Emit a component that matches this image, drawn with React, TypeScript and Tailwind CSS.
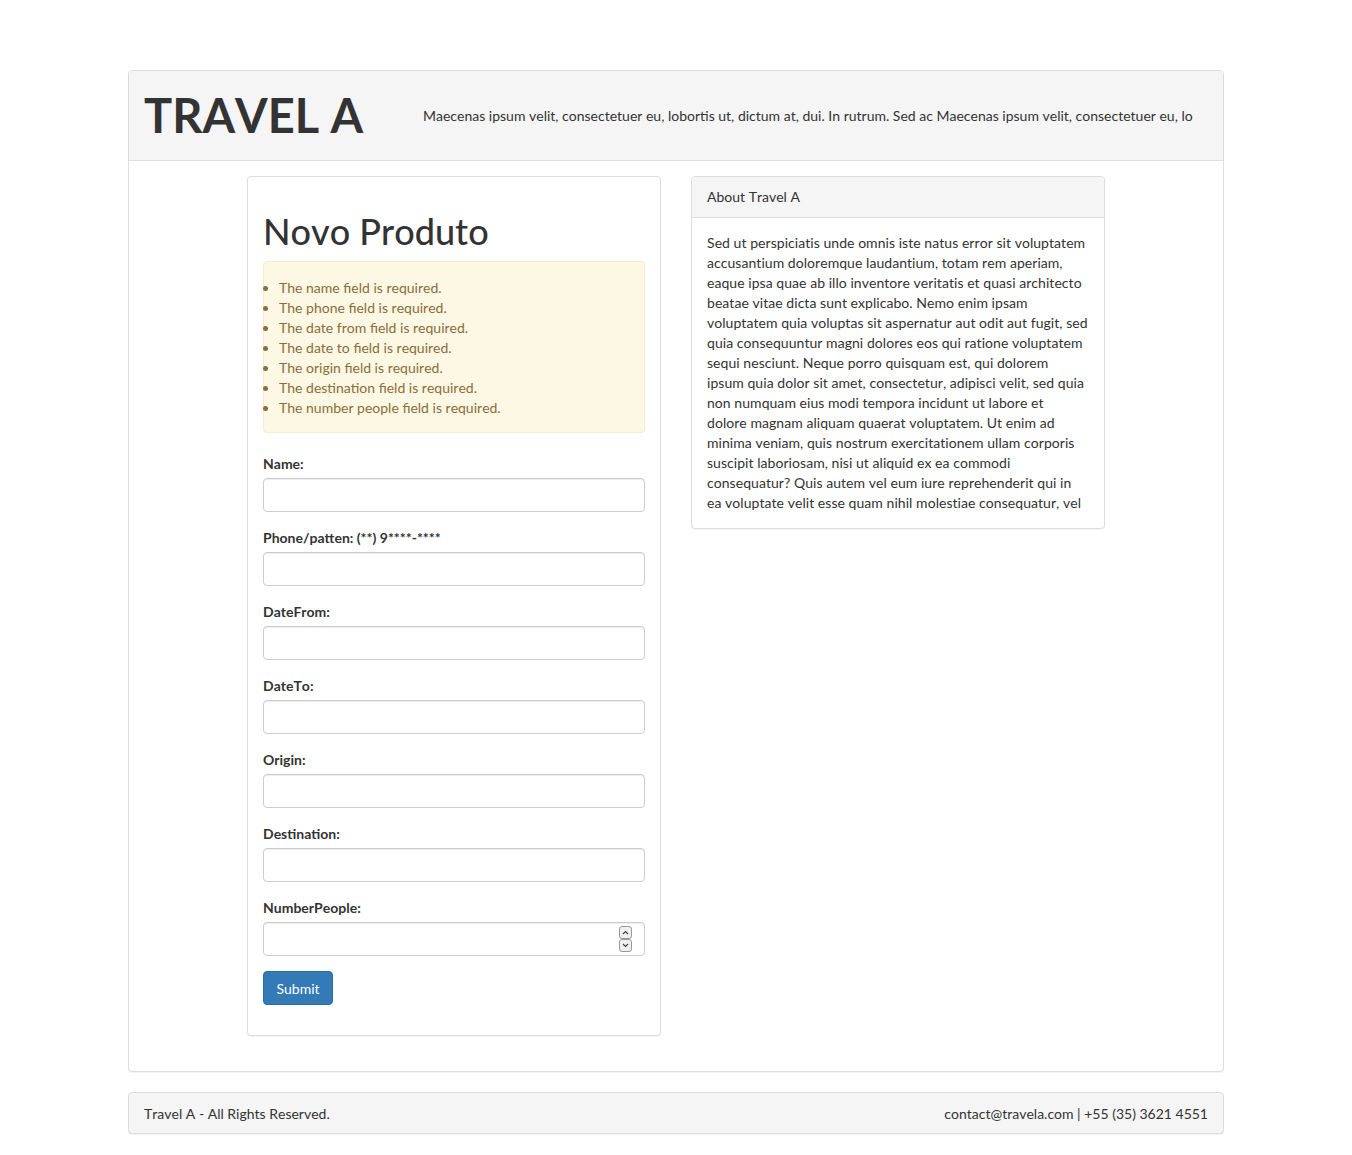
const errors = [
  "The name field is required.",
  "The phone field is required.",
  "The date from field is required.",
  "The date to field is required.",
  "The origin field is required.",
  "The destination field is required.",
  "The number people field is required.",
]

const fields = [
  { label: "Name:", type: "text" },
  { label: "Phone/patten: (**) 9****-****", type: "text" },
  { label: "DateFrom:", type: "text" },
  { label: "DateTo:", type: "text" },
  { label: "Origin:", type: "text" },
  { label: "Destination:", type: "text" },
  { label: "NumberPeople:", type: "number" },
]

// wrapped the same way as the original panel
const aboutLines = [
  "Sed ut perspiciatis unde omnis iste natus error sit voluptatem",
  "accusantium doloremque laudantium, totam rem aperiam,",
  "eaque ipsa quae ab illo inventore veritatis et quasi architecto",
  "beatae vitae dicta sunt explicabo. Nemo enim ipsam",
  "voluptatem quia voluptas sit aspernatur aut odit aut fugit, sed",
  "quia consequuntur magni dolores eos qui ratione voluptatem",
  "sequi nesciunt. Neque porro quisquam est, qui dolorem",
  "ipsum quia dolor sit amet, consectetur, adipisci velit, sed quia",
  "non numquam eius modi tempora incidunt ut labore et",
  "dolore magnam aliquam quaerat voluptatem. Ut enim ad",
  "minima veniam, quis nostrum exercitationem ullam corporis",
  "suscipit laboriosam, nisi ut aliquid ex ea commodi",
  "consequatur? Quis autem vel eum iure reprehenderit qui in",
  "ea voluptate velit esse quam nihil molestiae consequatur, vel",
]

function Spinner() {
  return (
    <div className="pointer-events-none absolute top-[4px] right-[13px] flex flex-col">
      <div className="flex h-[13px] w-[13px] items-center justify-center rounded-[3px] border border-[#999] bg-[#f0f0f0]">
        <svg width="7" height="5" viewBox="0 0 7 5" fill="none">
          <path d="M1 4L3.5 1.5L6 4" stroke="#444" strokeWidth="1.2" />
        </svg>
      </div>
      <div className="flex h-[13px] w-[13px] items-center justify-center rounded-[3px] border border-[#999] bg-[#f0f0f0]">
        <svg width="7" height="5" viewBox="0 0 7 5" fill="none">
          <path d="M1 1L3.5 3.5L6 1" stroke="#444" strokeWidth="1.2" />
        </svg>
      </div>
    </div>
  )
}

export default function App() {
  return (
    <div className="min-h-[1155px] bg-white pt-[70px] font-['Lato',sans-serif] text-[14px] leading-[20px] text-[#333] [font-kerning:none]">
      <div className="mx-auto w-[1096px]">
        <div className="mb-[20px] rounded-[4px] border border-[#ddd] bg-white shadow-[0_1px_1px_rgba(0,0,0,0.05)]">
          <div className="flex h-[90px] items-center rounded-t-[4px] border-b border-[#ddd] bg-[#f5f5f5] px-[15px]">
            <h1 className="w-[279px] shrink-0 text-[47px] leading-none font-bold text-[#333]">TRAVEL A</h1>
            <p className="whitespace-nowrap">
              Maecenas ipsum velit, consectetuer eu, lobortis ut, dictum at, dui. In rutrum. Sed ac Maecenas ipsum velit, consectetuer eu, lo
            </p>
          </div>

          <div className="flex justify-center gap-[30px] px-[15px] pt-[15px] pb-[15px]">
            <div className="mb-[20px] w-[414px] rounded-[4px] border border-[#ddd] bg-white shadow-[0_1px_1px_rgba(0,0,0,0.05)]">
              <div className="p-[15px]">
                <h1 className="mt-[20px] mb-[10px] text-[36px] leading-[39px] font-medium">Novo Produto</h1>
                <div className="mb-[20px] rounded-[4px] border border-[#faebcc] bg-[#fcf8e3] px-[15px] pt-[16px] pb-[14px] text-[#8a6d3b]">
                  <ul className="list-outside list-disc pl-0">
                    {errors.map((e) => (
                      <li key={e}>{e}</li>
                    ))}
                  </ul>
                </div>
                <form onSubmit={(e) => e.preventDefault()}>
                  {fields.map((f) => (
                    <div key={f.label} className="mb-[15px]">
                      <label className="mb-[4px] block pt-[1px] font-bold">{f.label}</label>
                      <div className="relative">
                        <input
                          type={f.type}
                          className="block h-[34px] w-full rounded-[4px] border border-[#ccc] bg-white px-[12px] py-[6px] text-[14px] text-[#555] shadow-[inset_0_1px_1px_rgba(0,0,0,0.075)] outline-none [appearance:textfield] [&::-webkit-inner-spin-button]:appearance-none"
                        />
                        {f.type === "number" && <Spinner />}
                      </div>
                    </div>
                  ))}
                  <div className="mb-[15px]">
                    <button
                      type="submit"
                      className="h-[34px] w-[70px] rounded-[4px] border border-[#2e6da4] bg-[#337ab7] pt-[1px] text-[14px] text-white"
                    >
                      Submit
                    </button>
                  </div>
                </form>
              </div>
            </div>

            <div className="mb-[20px] w-[414px] self-start rounded-[4px] border border-[#ddd] bg-white shadow-[0_1px_1px_rgba(0,0,0,0.05)]">
              <div className="rounded-t-[4px] border-b border-[#ddd] bg-[#f5f5f5] px-[15px] py-[10px]">About Travel A</div>
              <div className="p-[15px]">
                <p className="tracking-[0.05px] whitespace-nowrap">
                  {aboutLines.map((line, i) => (
                    <span key={i} className="block">
                      {line}
                    </span>
                  ))}
                </p>
              </div>
            </div>
          </div>
        </div>

        <div className="mb-[20px] flex items-center justify-between rounded-[4px] border border-[#ddd] bg-[#f5f5f5] px-[15px] pt-[11px] pb-[9px] shadow-[0_1px_1px_rgba(0,0,0,0.05)]">
          <span>Travel A - All Rights Reserved.</span>
          <span>contact@travela.com | +55 (35) 3621 4551</span>
        </div>
      </div>
    </div>
  )
}
